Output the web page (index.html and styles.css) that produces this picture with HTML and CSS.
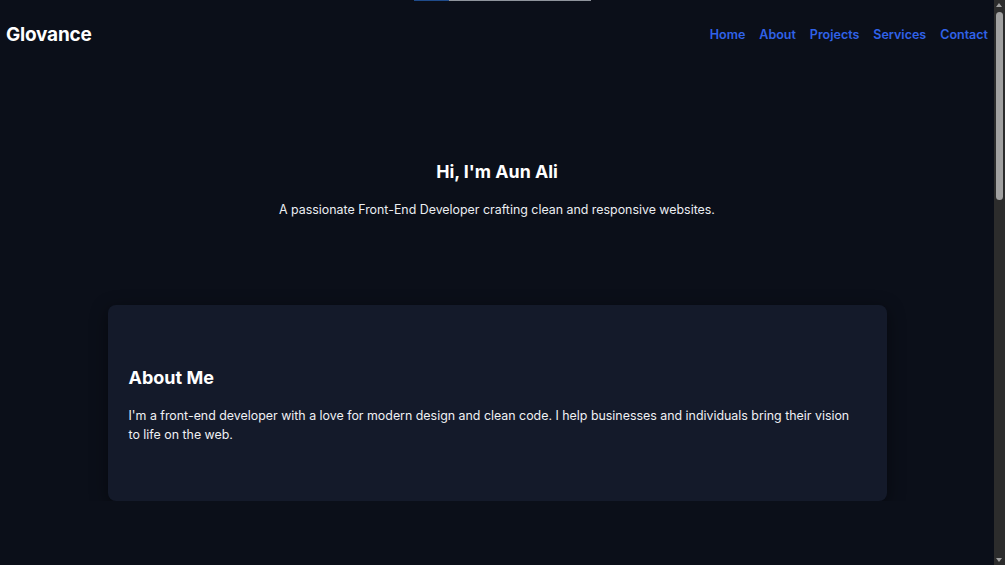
FILE: index.html
```html
<!DOCTYPE html>
<html lang="en">
<head>
<meta charset="utf-8">
<title>Glovance</title>
<link rel="stylesheet" href="styles.css">
</head>
<body>
<div class="topline"><span class="topline-fill"></span></div>
<div class="page">
  <header class="site-header">
    <div class="logo">Glovance</div>
    <nav class="nav">
      <a href="#home">Home</a>
      <a href="#about">About</a>
      <a href="#projects">Projects</a>
      <a href="#services">Services</a>
      <a href="#contact">Contact</a>
    </nav>
  </header>
  <main>
    <section class="hero" id="home">
      <h1>Hi, I'm Aun Ali</h1>
      <p>A passionate Front-End Developer crafting clean and responsive websites.</p>
    </section>
    <section class="card" id="about">
      <h2>About Me</h2>
      <p>I'm a front-end developer with a love for modern design and clean code. I help businesses and individuals bring their vision to life on the web.</p>
    </section>
  </main>
</div>
<div class="scrollbar" aria-hidden="true">
  <span class="sb-arrow sb-up"></span>
  <span class="sb-thumb"></span>
  <span class="sb-arrow sb-down"></span>
</div>
</body>
</html>
```
FILE: styles.css
```css
html {
  background: #0b0f19;
}
body {
  margin: 0;
  background: #0b0f19;
  color: #f3f4f6;
  font-family: Inter, "Open Sans", sans-serif;
  overflow: hidden;
}
.page {
  margin-right: 11px;
}
.topline {
  position: absolute;
  top: 0;
  left: 414px;
  width: 177px;
  height: 1px;
  background: #8f949c;
}
.topline-fill {
  display: block;
  width: 35px;
  height: 1px;
  background: #1f4b8a;
}
.site-header {
  display: flex;
  justify-content: space-between;
  align-items: center;
  height: 68px;
  padding: 0 6px;
}
.logo {
  font-size: 19px;
  font-weight: 700;
  color: #ffffff;
  letter-spacing: -0.2px;
}
.nav {
  display: flex;
  gap: 14px;
}
.nav a {
  color: #3062e8;
  text-decoration: none;
  font-size: 12.5px;
  font-weight: 600;
}
.hero {
  text-align: center;
  padding-top: 92px;
  margin-bottom: 85px;
}
.hero h1 {
  margin: 0 0 17px;
  font-size: 17.8px;
  line-height: 23px;
  font-weight: 700;
  color: #ffffff;
}
.hero p {
  margin: 0;
  font-size: 12.4px;
  line-height: 20px;
  color: #eceef2;
}
.card {
  max-width: 737px;
  margin: 0 auto;
  padding: 61px 21px 57px;
  background: #141a2a;
  border-radius: 8px;
  box-shadow: 0 4px 18px rgba(0, 0, 0, 0.45);
}
.card h2 {
  margin: 0 0 17px;
  font-size: 18px;
  line-height: 23px;
  font-weight: 700;
  color: #ffffff;
}
.card p {
  margin: 0;
  max-width: 727px;
  font-size: 12.4px;
  line-height: 19px;
  color: #f0f1f4;
}
.scrollbar {
  position: fixed;
  top: 0;
  right: 0;
  width: 11px;
  height: 100vh;
  background: #2c2c2c;
}
.sb-thumb {
  position: absolute;
  top: 12px;
  left: 2px;
  width: 7px;
  height: 188px;
  border-radius: 4px;
  background: #a1a1a1;
}
.sb-arrow {
  position: absolute;
  left: 2px;
  width: 0;
  height: 0;
  border-left: 3.5px solid transparent;
  border-right: 3.5px solid transparent;
}
.sb-up {
  top: 3px;
  border-bottom: 4px solid #a1a1a1;
}
.sb-down {
  bottom: 3px;
  border-top: 4px solid #a1a1a1;
}
```
